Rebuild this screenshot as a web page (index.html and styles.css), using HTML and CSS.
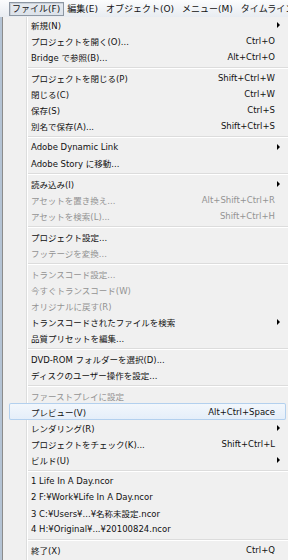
FILE: index.html
```html
<!DOCTYPE html>
<html>
	<head>
		<meta charset="utf-8" />
		<title>ファイル</title>
		<link rel="stylesheet" href="styles.css">
	</head>
	<body>
		<div class="menubar">
			<span class="top open">ファイル(F)</span>
			<span class="top">編集(E)</span>
			<span class="top">オブジェクト(O)</span>
			<span class="top">メニュー(M)</span>
			<span class="top">タイムライン</span>
		</div>
		<div class="window">
			<div class="frame"></div>
			<div class="menu">
				<div class="item"><span>新規(N)</span><span></span><i class="arrow"></i></div>
				<div class="item"><span>プロジェクトを開く(O)...</span><span>Ctrl+O</span></div>
				<div class="item"><span>Bridge で参照(B)...</span><span>Alt+Ctrl+O</span></div>
				<div class="sep"></div>
				<div class="item"><span>プロジェクトを閉じる(P)</span><span>Shift+Ctrl+W</span></div>
				<div class="item"><span>閉じる(C)</span><span>Ctrl+W</span></div>
				<div class="item"><span>保存(S)</span><span>Ctrl+S</span></div>
				<div class="item"><span>別名で保存(A)...</span><span>Shift+Ctrl+S</span></div>
				<div class="sep"></div>
				<div class="item"><span>Adobe Dynamic Link</span><span></span><i class="arrow"></i></div>
				<div class="item"><span>Adobe Story に移動...</span><span></span></div>
				<div class="sep"></div>
				<div class="item"><span>読み込み(I)</span><span></span><i class="arrow"></i></div>
				<div class="item off"><span>アセットを置き換え...</span><span>Alt+Shift+Ctrl+R</span></div>
				<div class="item off"><span>アセットを検索(L)...</span><span>Shift+Ctrl+H</span></div>
				<div class="sep"></div>
				<div class="item"><span>プロジェクト設定...</span><span></span></div>
				<div class="item off"><span>フッテージを変換...</span><span></span></div>
				<div class="sep"></div>
				<div class="item off"><span>トランスコード設定...</span><span></span></div>
				<div class="item off"><span>今すぐトランスコード(W)</span><span></span></div>
				<div class="item off"><span>オリジナルに戻す(R)</span><span></span></div>
				<div class="item"><span>トランスコードされたファイルを検索</span><span></span><i class="arrow"></i></div>
				<div class="item"><span>品質プリセットを編集...</span><span></span></div>
				<div class="sep"></div>
				<div class="item"><span>DVD-ROM フォルダーを選択(D)...</span><span></span></div>
				<div class="item"><span>ディスクのユーザー操作を設定...</span><span></span></div>
				<div class="sep"></div>
				<div class="item off"><span>ファーストプレイに設定</span><span></span></div>
				<div class="item hot"><span>プレビュー(V)</span><span>Alt+Ctrl+Space</span></div>
				<div class="item"><span>レンダリング(R)</span><span></span><i class="arrow"></i></div>
				<div class="item"><span>プロジェクトをチェック(K)...</span><span>Shift+Ctrl+L</span></div>
				<div class="item"><span>ビルド(U)</span><span></span><i class="arrow"></i></div>
				<div class="sep"></div>
				<div class="item"><span>1 Life In A Day.ncor</span><span></span></div>
				<div class="item"><span>2 F:¥Work¥Life In A Day.ncor</span><span></span></div>
				<div class="item"><span>3 C:¥Users¥...¥名称未設定.ncor</span><span></span></div>
				<div class="item"><span>4 H:¥Original¥...¥20100824.ncor</span><span></span></div>
				<div class="sep"></div>
				<div class="item"><span>終了(X)</span><span>Ctrl+Q</span></div>
			</div>
		</div>
	</body>
</html>
```
FILE: styles.css
```css
*{
	margin: 0;
	padding: 0;
	box-sizing: border-box;
}
body{
	width: 288px;
	height: 560px;
	overflow: hidden;
	background: #f0f0f0;
	font-family: "DejaVu Sans", "Noto Sans CJK JP", sans-serif;
	font-size: 8.5px;
	color: #111;
}
.menubar{
	display: flex;
	height: 17px;
	padding: 2px 0 0 9px;
	overflow: hidden;
	white-space: nowrap;
	background: linear-gradient(#fbfcfd, #e8ecf1);
	font-size: 9px;
}
.top{
	flex: none;
	height: 14px;
	line-height: 12px;
	padding: 0 4px 0 2px;
	border: 1px solid transparent;
}
.open{
	padding-right: 3px;
	border-color: #8d97a3;
	background: linear-gradient(#e6eaef, #dce2e9);
	box-shadow: inset 1px 1px 0 #c9d0d8;
}
.window{
	display: flex;
	height: 543px;
}
.frame{
	width: 2px;
	background: #b4c3d4;
}
.menu{
	flex: 1;
	border-left: 1px solid #8c8c8c;
	background:
		linear-gradient(90deg, transparent 23px, #dcdddd 23px, #dcdddd 24px, #fff 24px, #fff 25px, transparent 25px),
		#f0f0f0;
}
.item{
	display: grid;
	grid-template-columns: 1fr auto 11px;
	align-items: center;
	height: 16px;
	margin: 0 2px 0 6px;
	padding-left: 22px;
	white-space: nowrap;
}
.off{
	color: #939393;
}
.hot{
	height: 17px;
	margin-top: -1px;
	border-radius: 2px;
	background: linear-gradient(#f3f7fc, #e4eef9);
	box-shadow: inset 0 0 0 1px #b3d0ee;
}
.arrow{
	grid-column: 3;
	justify-self: start;
	margin-left: 2px;
	border-left: 3px solid #000;
	border-top: 3px solid transparent;
	border-bottom: 3px solid transparent;
}
.sep{
	margin: 2px 0 1px 25px;
	border-top: 1px solid #dcdcdc;
	border-bottom: 1px solid #fff;
}
```
